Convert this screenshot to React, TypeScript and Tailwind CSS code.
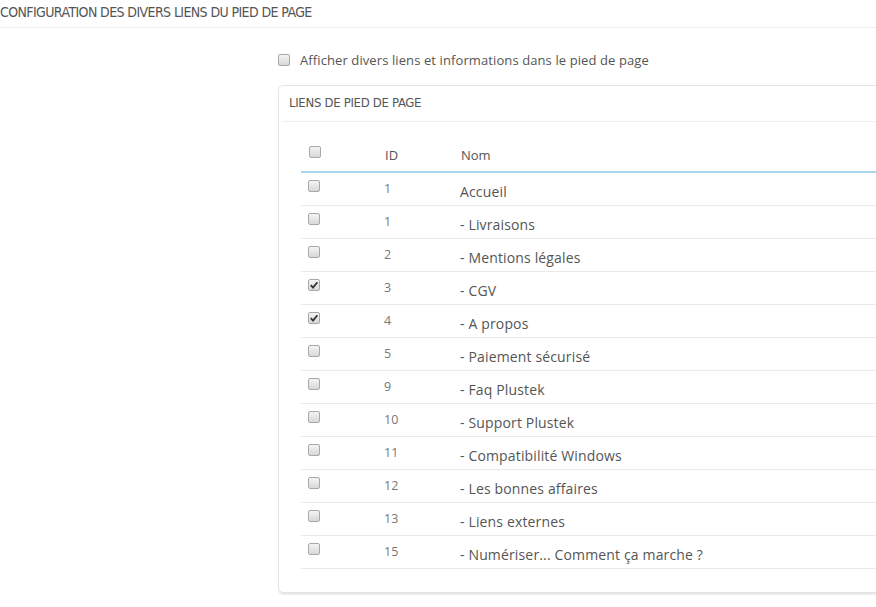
import React from "react";

type Link = { id: number; name: string; checked?: boolean };

const links: Link[] = [
  { id: 1, name: "Accueil" },
  { id: 1, name: "- Livraisons" },
  { id: 2, name: "- Mentions légales" },
  { id: 3, name: "- CGV", checked: true },
  { id: 4, name: "- A propos", checked: true },
  { id: 5, name: "- Paiement sécurisé" },
  { id: 9, name: "- Faq Plustek" },
  { id: 10, name: "- Support Plustek" },
  { id: 11, name: "- Compatibilité Windows" },
  { id: 12, name: "- Les bonnes affaires" },
  { id: 13, name: "- Liens externes" },
  { id: 15, name: "- Numériser... Comment ça marche ?" },
];

const condensed = {
  fontFamily: '"DejaVu Sans Condensed", "DejaVu Sans", sans-serif',
};

const Box = ({ checked }: { checked?: boolean }) => (
  <span className="relative block w-[12px] h-[12px] rounded-[2px] border border-[#a9a9a9] bg-gradient-to-b from-[#f4f4f4] to-[#d8d8d8]">
    {checked && (
      <svg viewBox="0 0 12 12" className="absolute -left-px -top-px w-[12px] h-[12px]">
        <path d="M2.8 6.2 L5 8.6 L9.4 3.2" fill="none" stroke="#333" strokeWidth="1.8" />
      </svg>
    )}
  </span>
);

export default function App() {
  return (
    <div className="w-[876px] h-[607px] overflow-hidden bg-white text-[#555]" style={{ fontFamily: '"Open Sans", sans-serif' }}>
      <div className="h-[28px] border-b border-[#eee] pt-[3px]">
        <h2 className="text-[14px] leading-[18px] uppercase tracking-[-0.6px] text-[#555]" style={condensed}>
          Configuration des divers liens du pied de page
        </h2>
      </div>

      <div className="pl-[278px]">
        <label className="flex items-center gap-[10px] mt-[25px] h-[14px]">
          <Box />
          <span className="text-[13px] leading-[18px] tracking-[0.1px]">Afficher divers liens et informations dans le pied de page</span>
        </label>

        <div className="mt-[18px] w-[640px] border border-[#e3e3e3] rounded-[5px] shadow-[0_2px_0_rgba(0,0,0,0.08)] pl-[4px] pb-[23px]">
          <div className="h-[36px] border-b border-[#eee] pl-[6px] pt-[8px]">
            <h3 className="text-[13px] leading-[18px] uppercase tracking-[-0.3px]" style={condensed}>
              Liens de pied de page
            </h3>
          </div>

          <div className="ml-[18px] mt-[16px]">
            <div className="flex h-[35px] border-b-2 border-[#a8d7ef]">
              <div className="w-[76px] pl-[8px] pt-[8px]">
                <Box />
              </div>
              <div className="w-[76px] pl-[8px] pt-[8px] text-[13px] leading-[18px]">ID</div>
              <div className="flex-1 pl-[8px] pt-[8px] text-[13px] leading-[18px]">Nom</div>
            </div>
            {links.map((l, i) => (
              <div key={i} className="flex h-[33px] border-b border-[#eaeaea]">
                <div className="w-[76px] pl-[7px] pt-[7px]">
                  <Box checked={l.checked} />
                </div>
                <div className="w-[76px] pl-[7px] pt-[7px] text-[12.5px] leading-[18px] text-[#777]">{l.id}</div>
                <div className="flex-1 pl-[7px] pt-[9px] text-[14px] leading-[20px] tracking-[0.15px] text-[#555]">{l.name}</div>
              </div>
            ))}
          </div>
        </div>
      </div>
    </div>
  );
}
